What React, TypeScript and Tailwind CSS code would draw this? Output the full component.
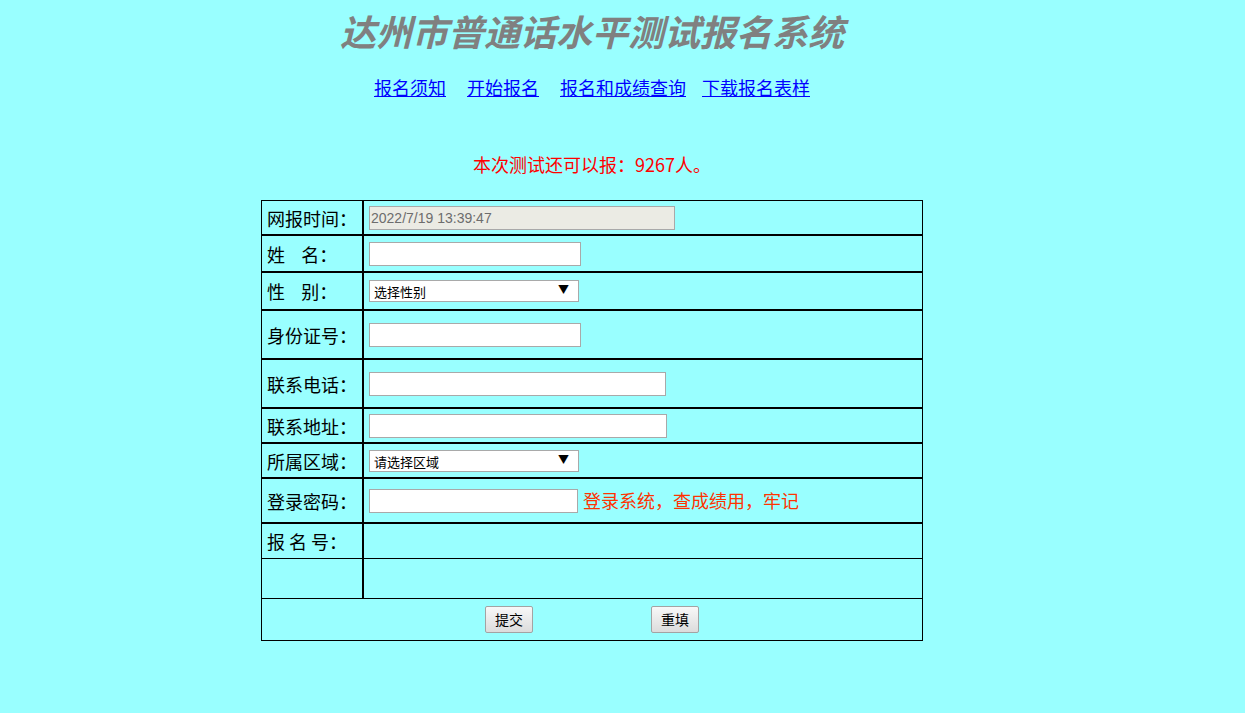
import { ReactNode } from 'react'

const cjk = { fontFamily: '"Noto Sans CJK SC", "Liberation Sans", sans-serif' }

function Row({ label, h, thin, children }: { label: ReactNode; h: string; thin?: boolean; children?: ReactNode }) {
    return (
        <div className={`flex ${h} ${thin ? 'border-b' : 'border-b-2'} border-black box-border`}>
            <div className="w-[102px] flex-shrink-0 border-r-2 border-black flex items-center pl-[5px] text-[18px] text-black leading-none whitespace-pre">
                {label}
            </div>
            <div className="flex-1 flex items-center pl-[5px]">{children}</div>
        </div>
    )
}

function TextBox({ w }: { w: string }) {
    return <input type="text" className={`${w} h-[24px] bg-white border border-[#a9a9a9] outline-none`} />
}

function Select({ text }: { text: string }) {
    return (
        <div className="relative w-[210px] h-[22px] bg-white border border-[#a9a9a9] flex items-end pl-[4px] pb-[1px] cursor-default">
            <span className="text-[13px] leading-[16px] text-black">{text}</span>
            <span className="absolute right-[9px] top-[3px] text-[11px] leading-none text-black">▼</span>
        </div>
    )
}

function Btn({ children }: { children: ReactNode }) {
    return (
        <button className="w-[48px] h-[27px] border border-[#a3a3a3] rounded-[2px] bg-gradient-to-b from-[#f8f8f8] to-[#dcdcdc] text-[14px] text-black">
            {children}
        </button>
    )
}

export default function App() {
    return (
        <div className="min-h-[713px] bg-[#99ffff]" style={cjk}>
            <div className="w-[1184px] flex flex-col items-center">
                <h1 className="h-[60px] leading-[60px] text-[36px] font-bold italic text-[#808080]">
                    达州市普通话水平测试报名系统
                </h1>
                <nav className="mt-[15px] h-[24px] leading-[24px] text-[18px] flex">
                    <a href="#" className="text-[#0000ff] underline">报名须知</a>
                    <a href="#" className="ml-[21px] text-[#0000ff] underline">开始报名</a>
                    <a href="#" className="ml-[21px] text-[#0000ff] underline">报名和成绩查询</a>
                    <a href="#" className="ml-[16px] text-[#0000ff] underline">下载报名表样</a>
                </nav>
                <p className="mt-[53px] h-[24px] leading-[24px] text-[18px] text-[#ff0000]">本次测试还可以报：9267人。</p>

                <div className="mt-[24px] w-[662px] border border-black border-b-0 box-border">
                    <Row label="网报时间：" h="h-[35px]">
                        <input
                            type="text"
                            disabled
                            value="2022/7/19 13:39:47"
                            className="w-[306px] h-[24px] bg-[#ebebe4] border border-[#a9a9a9] text-[14px] text-[#6d6d6d] pl-[1px]"
                            style={{ fontFamily: '"Liberation Sans", Arial, sans-serif' }}
                        />
                    </Row>
                    <Row label={'姓    名：'} h="h-[37px]">
                        <TextBox w="w-[212px]" />
                    </Row>
                    <Row label={'性    别：'} h="h-[38px]">
                        <Select text="选择性别" />
                    </Row>
                    <Row label="身份证号：" h="h-[49px]">
                        <TextBox w="w-[212px]" />
                    </Row>
                    <Row label="联系电话：" h="h-[49px]">
                        <TextBox w="w-[297px]" />
                    </Row>
                    <Row label="联系地址：" h="h-[35px]">
                        <TextBox w="w-[298px]" />
                    </Row>
                    <Row label="所属区域：" h="h-[35px]">
                        <Select text="请选择区域" />
                    </Row>
                    <Row label="登录密码：" h="h-[45px]">
                        <input type="password" className="w-[209px] h-[24px] bg-white border border-[#a9a9a9] outline-none" />
                        <span className="ml-[5px] text-[18px] text-[#ff3300]">登录系统，查成绩用，牢记</span>
                    </Row>
                    <Row label="报 名 号：" h="h-[35px]" thin />
                    <Row label="" h="h-[40px]" thin />
                    <div className="h-[42px] border-b border-black box-border flex items-center justify-center gap-[118px]">
                        <Btn>提交</Btn>
                        <Btn>重填</Btn>
                    </div>
                </div>
            </div>
        </div>
    )
}
